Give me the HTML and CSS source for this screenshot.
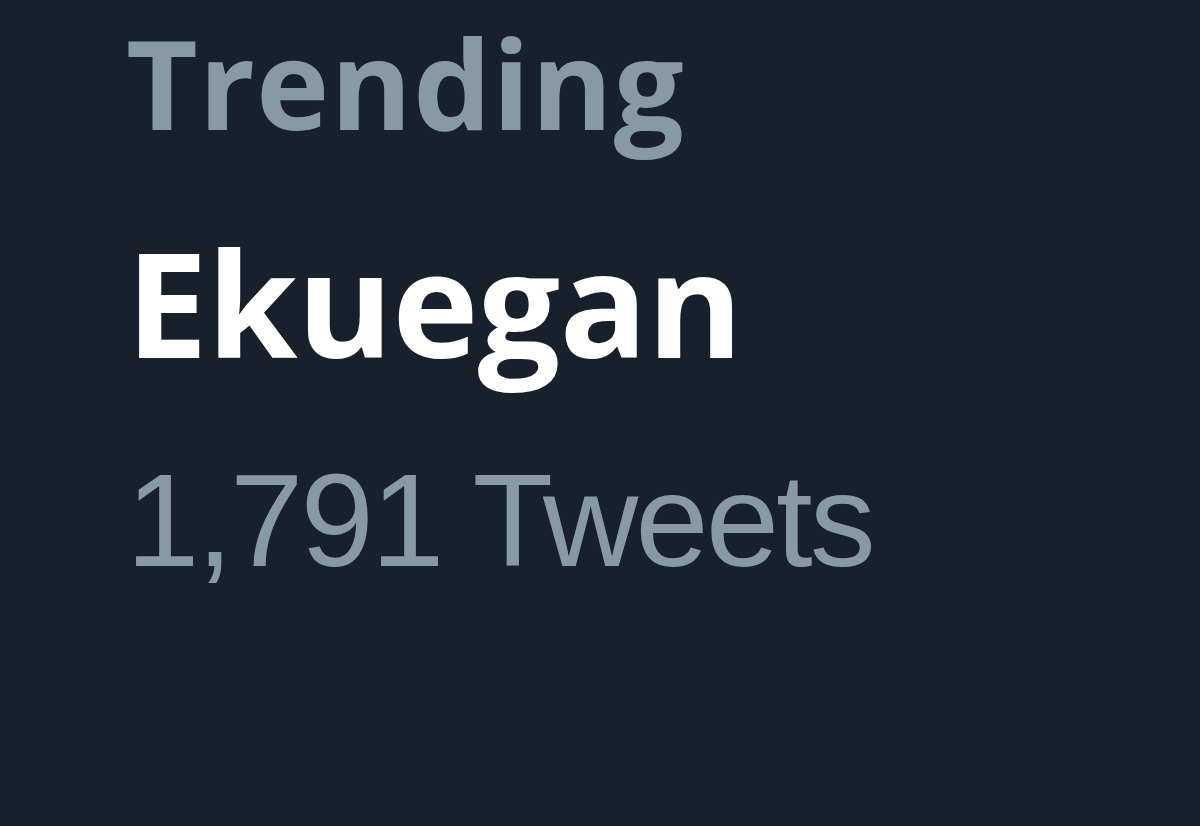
FILE: index.html
```html
<!DOCTYPE html>
<html lang="en">
<head>
  <meta charset="UTF-8" />
  <title>Trending</title>
  <link rel="stylesheet" href="styles.css">
</head>
<body>
  <div class="trend">
    <div class="trend-label">Trending</div>
    <div class="trend-name">Ekuegan</div>
    <div class="trend-count">1,791 Tweets</div>
  </div>
</body>
</html>
```

FILE: styles.css
```css
* {
  box-sizing: border-box;
}
html, body {
  margin: 0;
  height: 100%;
}
body {
  background-color: #17202b;
  overflow: hidden;
}
.trend {
  display: flex;
  flex-direction: column;
  padding: 0 0 0 126px;
}
.trend-label {
  font-family: "Open Sans", sans-serif;
  font-weight: 700;
  font-size: 124px;
  line-height: 164px;
  color: #8899a6;
  letter-spacing: 1px;
}
.trend-name {
  font-family: "Open Sans", sans-serif;
  font-weight: 700;
  font-size: 146px;
  line-height: 276px;
  color: #ffffff;
  letter-spacing: -0.7px;
}
.trend-count {
  font-family: "Liberation Sans", Arial, sans-serif;
  font-size: 132px;
  line-height: 162px;
  color: #8899a6;
  letter-spacing: -3px;
}
```
